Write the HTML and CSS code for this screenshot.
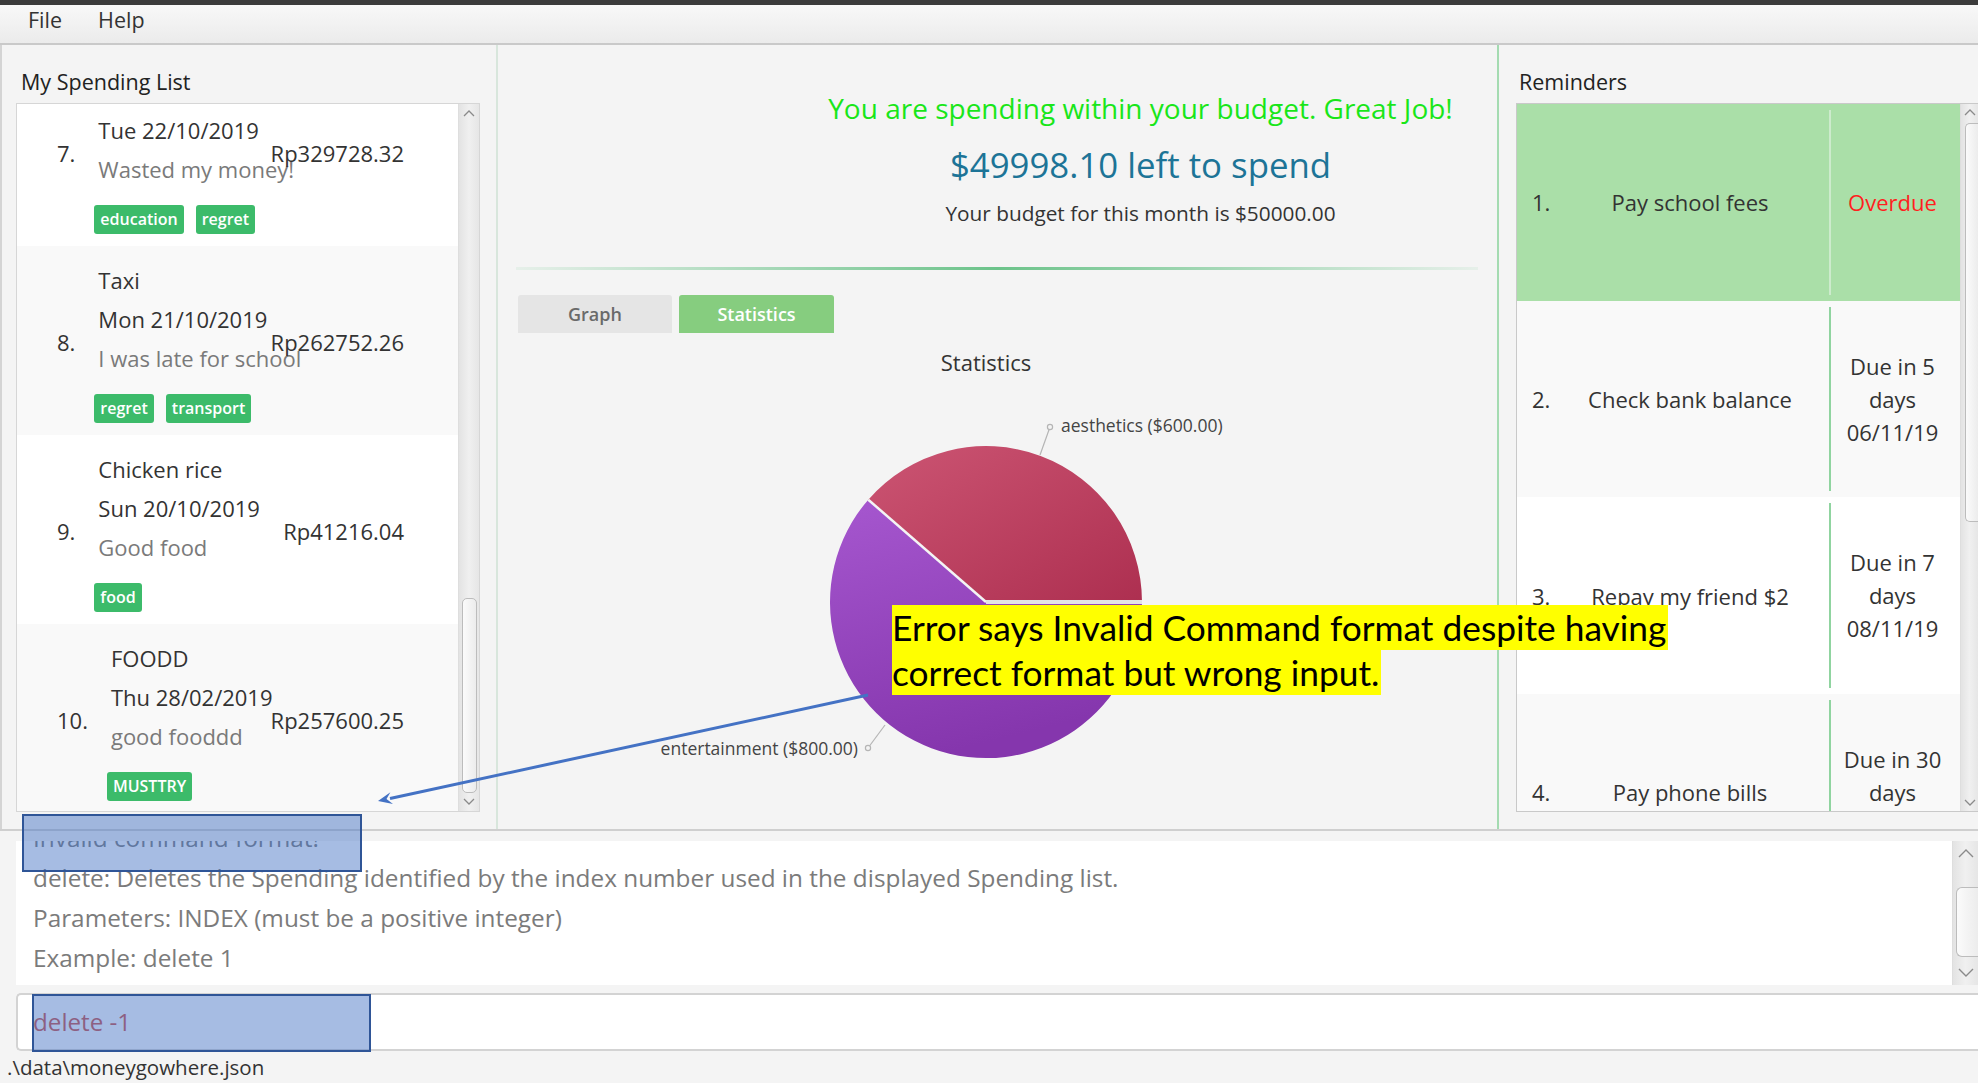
FILE: index.html
```html
<!DOCTYPE html>
<html>
<head>
<meta charset="utf-8">
<title>MoneyGoWhere</title>
<link rel="stylesheet" href="styles.css">
</head>
<body>
<div class="topstrip"></div>
<nav class="menubar"><span>File</span><span>Help</span></nav>

<main class="panes">
  <section class="pane pane-left">
    <h2 class="pane-title">My Spending List</h2>
    <div class="listbox sp-box">
      <div class="sp-list">
        <div class="sp-item sp-first">
          <div class="sp-idx">7.</div>
          <div class="sp-body">
            <div class="sp-line">&nbsp;</div>
            <div class="sp-line">Tue 22/10/2019</div>
            <div class="sp-line sp-desc">Wasted my money!</div>
            <div class="tags"><span class="tag">education</span><span class="tag">regret</span></div>
          </div>
          <div class="sp-price">Rp329728.32</div>
        </div>
        <div class="sp-item sp-alt">
          <div class="sp-idx">8.</div>
          <div class="sp-body">
            <div class="sp-line">Taxi</div>
            <div class="sp-line">Mon 21/10/2019</div>
            <div class="sp-line sp-desc">I was late for school</div>
            <div class="tags"><span class="tag">regret</span><span class="tag">transport</span></div>
          </div>
          <div class="sp-price">Rp262752.26</div>
        </div>
        <div class="sp-item">
          <div class="sp-idx">9.</div>
          <div class="sp-body">
            <div class="sp-line">Chicken rice</div>
            <div class="sp-line">Sun 20/10/2019</div>
            <div class="sp-line sp-desc">Good food</div>
            <div class="tags"><span class="tag">food</span></div>
          </div>
          <div class="sp-price">Rp41216.04</div>
        </div>
        <div class="sp-item sp-alt">
          <div class="sp-idx">10.</div>
          <div class="sp-body">
            <div class="sp-line">FOODD</div>
            <div class="sp-line">Thu 28/02/2019</div>
            <div class="sp-line sp-desc">good fooddd</div>
            <div class="tags"><span class="tag">MUSTTRY</span></div>
          </div>
          <div class="sp-price">Rp257600.25</div>
        </div>
      </div>
      <div class="vbar sp-bar">
        <div class="arrow"><svg width="12" height="8" viewBox="0 0 12 8"><polyline points="1,7 6,2 11,7" fill="none" stroke="#8a8a8a" stroke-width="1.3"/></svg></div>
        <div class="track"><div class="thumb sp-thumb"></div></div>
        <div class="arrow"><svg width="12" height="8" viewBox="0 0 12 8"><polyline points="1,1 6,6 11,1" fill="none" stroke="#8a8a8a" stroke-width="1.3"/></svg></div>
      </div>
    </div>
  </section>

  <section class="pane pane-mid">
    <div class="budget">
      <p class="b-status">You are spending within your budget. Great Job!</p>
      <p class="b-left">$49998.10 left to spend</p>
      <p class="b-total">Your budget for this month is $50000.00</p>
    </div>
    <div class="sep"></div>
    <div class="tabs">
      <div class="tab">Graph</div>
      <div class="tab tab-active">Statistics</div>
    </div>
    <div class="chart">
      <div class="chart-title">Statistics</div>
      <svg class="pie" width="940" height="452" viewBox="0 0 940 452">
        <defs>
          <linearGradient id="gRed" x1="0" y1="0" x2="1" y2="1">
            <stop offset="0" stop-color="#cc5573"/>
            <stop offset="1" stop-color="#ad2f50"/>
          </linearGradient>
          <linearGradient id="gPur" x1="0" y1="0" x2="0.3" y2="1">
            <stop offset="0" stop-color="#a657cf"/>
            <stop offset="1" stop-color="#8536ad"/>
          </linearGradient>
        </defs>
        <path d="M470 225 L626 225 A156 156 0 0 0 352.3 122.7 Z" fill="url(#gRed)"/>
        <path d="M470 225 L352.3 122.7 A156 156 0 1 0 626 225 Z" fill="url(#gPur)"/>
        <line x1="470" y1="225" x2="352.3" y2="122.7" stroke="#f4f4f4" stroke-width="2.5"/>
        <line x1="470" y1="225" x2="626" y2="225" stroke="#e4e4e4" stroke-width="4"/>
        <line x1="534" y1="50" x2="524" y2="78" stroke="#b5b5b5" stroke-width="1.2"/>
        <circle cx="534" cy="50" r="2.6" fill="#f4f4f4" stroke="#b5b5b5" stroke-width="1.2"/>
        <text class="pie-label" x="545" y="55">aesthetics ($600.00)</text>
        <line x1="352" y1="371" x2="369" y2="348" stroke="#b5b5b5" stroke-width="1.2"/>
        <circle cx="352" cy="371" r="2.6" fill="#f4f4f4" stroke="#b5b5b5" stroke-width="1.2"/>
        <text class="pie-label" x="342" y="378" text-anchor="end">entertainment ($800.00)</text>
      </svg>
    </div>
  </section>

  <section class="pane pane-right">
    <h2 class="pane-title">Reminders</h2>
    <div class="listbox rm-box">
      <div class="rm-list">
        <div class="rm-row rm-sel">
          <div class="rm-idx">1.</div>
          <div class="rm-name">Pay school fees</div>
          <div class="rm-status"><span class="overdue">Overdue</span></div>
        </div>
        <div class="rm-row rm-alt">
          <div class="rm-idx">2.</div>
          <div class="rm-name">Check bank balance</div>
          <div class="rm-status"><span>Due in 5</span><span>days</span><span>06/11/19</span></div>
        </div>
        <div class="rm-row">
          <div class="rm-idx">3.</div>
          <div class="rm-name">Repay my friend $2</div>
          <div class="rm-status"><span>Due in 7</span><span>days</span><span>08/11/19</span></div>
        </div>
        <div class="rm-row rm-alt">
          <div class="rm-idx">4.</div>
          <div class="rm-name">Pay phone bills</div>
          <div class="rm-status"><span>Due in 30</span><span>days</span><span>01/12/19</span></div>
        </div>
      </div>
      <div class="vbar rm-bar">
        <div class="arrow"><svg width="12" height="8" viewBox="0 0 12 8"><polyline points="1,7 6,2 11,7" fill="none" stroke="#8a8a8a" stroke-width="1.3"/></svg></div>
        <div class="track"><div class="thumb rm-thumb"></div></div>
        <div class="arrow"><svg width="12" height="8" viewBox="0 0 12 8"><polyline points="1,1 6,6 11,1" fill="none" stroke="#8a8a8a" stroke-width="1.3"/></svg></div>
      </div>
    </div>
  </section>
</main>

<div class="result">
  <div class="result-text">
    <div class="result-inner">
      <p>Invalid command format!</p>
      <p>delete: Deletes the Spending identified by the index number used in the displayed Spending list.</p>
      <p>Parameters: INDEX (must be a positive integer)</p>
      <p>Example: delete 1</p>
    </div>
  </div>
  <div class="vbar res-bar">
    <div class="arrow"><svg width="16" height="10" viewBox="0 0 16 10"><polyline points="1,9 8,2 15,9" fill="none" stroke="#8a8a8a" stroke-width="1.4"/></svg></div>
    <div class="track"><div class="thumb res-thumb"></div></div>
    <div class="arrow"><svg width="16" height="10" viewBox="0 0 16 10"><polyline points="1,1 8,8 15,1" fill="none" stroke="#8a8a8a" stroke-width="1.4"/></svg></div>
  </div>
</div>

<div class="command">delete -1</div>
<div class="status">.\data\moneygowhere.json</div>

<div class="note">
  <span class="hl">Error says Invalid Command format despite having</span>
  <span class="hl">correct format but wrong input.</span>
</div>
<div class="mark mark-result"></div>
<div class="mark mark-command"></div>
<svg class="arrow-overlay" width="1978" height="1083" viewBox="0 0 1978 1083">
  <line x1="868" y1="695" x2="390" y2="798.5" stroke="#4472c4" stroke-width="3"/>
  <polygon points="378,801 390.4,792.2 386.5,799 393,803.9" fill="#4472c4"/>
</svg>
</body>
</html>
```

FILE: styles.css
```css
* { box-sizing: border-box; margin: 0; padding: 0; }
html, body { width: 1978px; height: 1083px; overflow: hidden; }
body {
  background: #f4f4f4;
  font-family: "Open Sans", "Noto Sans", sans-serif;
  color: #333;
  position: relative;
}

.topstrip { height: 5px; background: #3b3b3b; }

.menubar {
  height: 40px;
  display: flex;
  gap: 36px;
  padding-left: 28px;
  font-size: 21.5px;
  line-height: 30px;
  color: #333;
  background: linear-gradient(#f8f8f8, #ebebeb);
  border-bottom: 2px solid #c9c9c9;
}

.panes {
  display: flex;
  height: 786px;
  border-bottom: 2px solid #cfcfcf;
}
.pane { height: 100%; }
.pane-title {
  font-weight: 400;
  font-size: 21.5px;
  line-height: 30px;
  color: #222;
  padding-top: 22px;
  height: 58px;
}

/* left */
.pane-left { width: 496px; border-left: 2px solid #d4d4d4; padding-left: 14px; }
.pane-left .pane-title { padding-left: 5px; }
.listbox { display: flex; background: #fff; border: 1px solid #d6d6d6; }
.sp-box { width: 464px; height: 709px; }
.sp-list { flex: 1; overflow: hidden; }
.sp-item {
  display: grid;
  grid-template-columns: auto 1fr;
  column-gap: 23px;
  align-items: center;
  height: 189px;
  padding: 15px 54px 12px 40px;
  background: #fff;
  font-size: 22px;
  color: #333;
}
.sp-first { margin-top: -47px; }
.sp-alt { background: #f9f9f9; }
.sp-idx { grid-column: 1; grid-row: 1; }
.sp-body { grid-column: 2; grid-row: 1; }
.sp-price { grid-column: 2; grid-row: 1; justify-self: end; align-self: center; }
.sp-line { line-height: 39px; white-space: nowrap; }
.sp-desc { color: #7a7a7a; }
.tags { display: flex; gap: 12px; margin-top: 16px; margin-left: -4px; }
.tag {
  height: 29px;
  line-height: 29px;
  padding: 0 6px;
  font-size: 16px;
  font-weight: 600;
  color: #fff;
  background: #3cbb6a;
  border-radius: 3px;
}

/* scrollbars */
.vbar {
  display: flex;
  flex-direction: column;
  background: linear-gradient(90deg, #e3e3e3, #f0f0f0 50%, #e6e6e6);
  border-left: 1px solid #dedede;
}
.vbar .arrow { display: flex; align-items: center; justify-content: center; flex: none; }
.vbar .track { flex: 1; }
.thumb {
  border: 1px solid #bcbcbc;
  border-radius: 5px;
  background: linear-gradient(90deg, #fbfbfb, #ececec);
}
.sp-bar { width: 21px; }
.sp-bar .arrow { height: 18px; }
.sp-thumb { margin: 476px 2px 0 3px; height: 195px; }

/* middle */
.pane-mid {
  width: 1003px;
  border-left: 2px solid #d8e6dc;
  border-right: 2px solid #a4dbb1;
}
.budget { padding: 44px 0 0 286px; text-align: center; }
.b-status { font-size: 28px; line-height: 38px; color: #19e619; }
.b-left { margin-top: 15px; font-size: 34.8px; line-height: 46px; color: #1d7497; }
.b-total { margin-top: 10px; font-size: 20.8px; line-height: 30px; color: #333; }
.sep {
  margin: 39px 19px 0 18px;
  height: 3px;
  background: linear-gradient(90deg, rgba(110,200,140,0.1), #6cc38a 50%, rgba(110,200,140,0.1));
}
.tabs { display: flex; gap: 7px; margin-top: 25px; padding-left: 20px; }
.tab {
  width: 154px;
  height: 38px;
  line-height: 38px;
  text-align: center;
  font-size: 18px;
  font-weight: 600;
  color: #6a6a6a;
  background: #e5e5e5;
  border-radius: 3px 3px 0 0;
}
.tab-active { width: 155px; background: #86cd7f; color: #fff; }
.chart { margin: 14px 41px 0 18px; }
.chart-title { text-align: center; font-size: 22px; line-height: 30px; color: #333; }
.pie { display: block; }
.pie-label { font-family: "Open Sans", sans-serif; font-size: 17.5px; fill: #444; }

/* right */
.pane-right { width: 479px; padding-left: 17px; }
.pane-right .pane-title { padding-left: 3px; }
.rm-box { width: 462px; height: 709px; border-right: none; border-color: #c9c9c9; }
.rm-list { flex: 1; overflow: hidden; }
.rm-row {
  display: grid;
  grid-template-columns: 34px 278px 1fr;
  align-items: center;
  height: 196.7px;
  font-size: 22px;
  color: #333;
  background: #fff;
}
.rm-alt { background: #f9f9f9; }
.rm-sel { background: #aadfa8; }
.rm-idx { padding-left: 15px; }
.rm-name { text-align: center; white-space: nowrap; }
.rm-status {
  align-self: stretch;
  margin: 6px 0;
  padding-right: 6px;
  border-left: 2px solid #90d4a0;
  display: flex;
  flex-direction: column;
  justify-content: center;
  align-items: center;
  line-height: 33px;
  white-space: nowrap;
}
.rm-sel .rm-status { border-left-color: #cdebcd; }
.overdue { color: #ff1f1f; }
.rm-bar { width: 18px; }
.rm-bar .arrow { height: 16px; }
.rm-thumb { margin: 3px 0 0 4px; height: 399px; border-right: none; border-radius: 5px 0 0 5px; }

/* result */
.result {
  display: flex;
  margin: 10px 0 0 16px;
  height: 144px;
  background: #fff;
}
.result-text { flex: 1; overflow: hidden; padding-left: 17px; }
.result-inner { margin-top: -23px; font-size: 24.35px; line-height: 40px; color: #7b7b7b; white-space: nowrap; }
.res-bar { width: 26px; }
.res-bar .arrow { height: 24px; }
.res-thumb { margin: 22px 0 0 3px; height: 70px; border-right: none; border-radius: 6px 0 0 6px; }

/* command */
.command {
  margin: 8px 0 0 16px;
  height: 58px;
  padding-left: 15px;
  font-size: 24.2px;
  line-height: 54px;
  color: #cf4f45;
  background: #fff;
  border: 2px solid #d3d3d3;
  border-right: none;
  border-radius: 5px 0 0 5px;
}
.status {
  height: 32px;
  padding-left: 7px;
  font-size: 20.5px;
  line-height: 32px;
  color: #333;
}

/* annotation overlays */
.note {
  position: absolute;
  left: 892px;
  top: 605px;
  font-family: Lato, "Open Sans", sans-serif;
  font-size: 35.3px;
  line-height: 45px;
  color: #000;
}
.hl { display: block; width: fit-content; background: #ffff00; padding-right: 2px; white-space: nowrap; }
.mark {
  position: absolute;
  background: rgba(68, 114, 196, 0.48);
  border: 2px solid #2f5597;
}
.mark-result { left: 22px; top: 814px; width: 340px; height: 58px; }
.mark-command { left: 32px; top: 994px; width: 339px; height: 58px; }
.arrow-overlay { position: absolute; left: 0; top: 0; pointer-events: none; }
```
